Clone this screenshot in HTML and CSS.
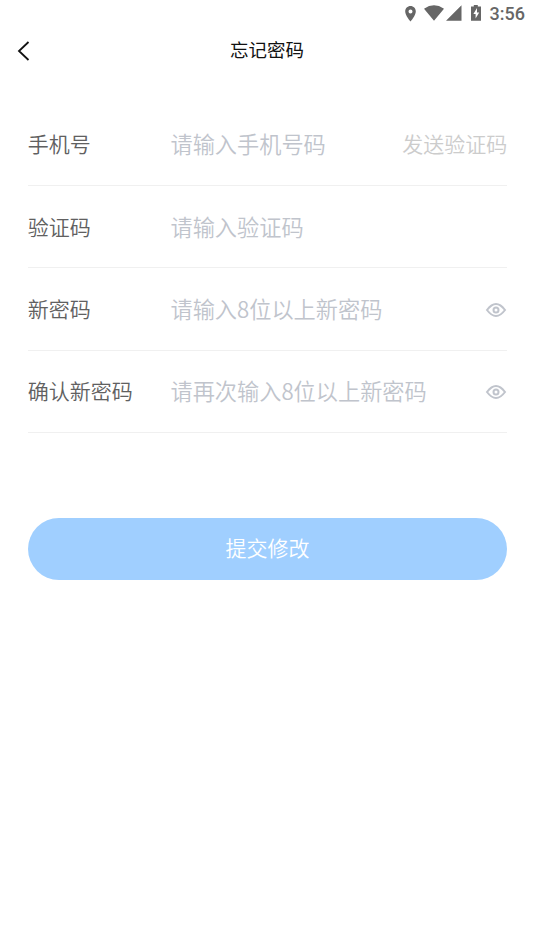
FILE: index.html
```html
<!DOCTYPE html>
<html lang="zh-CN">
<head>
<meta charset="utf-8">
<title>忘记密码</title>
<link rel="stylesheet" href="styles.css">
</head>
<body>
<div class="status">
<svg class="status-icons" width="80" height="24" viewBox="402 0 80 24"><path fill="#666" fill-rule="evenodd" d="M410.500 6c-3 0-5.300 2.400-5.300 5.400 0 4 5.300 10 5.300 10s5.300-6 5.300-10c0-3-2.300-5.400-5.300-5.400zm0 3.500a2 2 0 1 1 0 4 2 2 0 0 1 0-4z"/><path fill="#666" d="M424 8.700Q434 2 444 8.700L434 20.800zM461.500 5.200V20.800H446zM471 6.500h2.800V5h4v1.500H481V20.800h-10z"/><path fill="#fff" d="M477 8l-3.600 6h2.200v4.500l3.600-6H477z"/></svg>
<span class="clock">3:56</span>
</div>
<header class="header">
<svg class="back" width="16" height="24" viewBox="0 0 16 24"><path d="M12.500 3L3 12l9.500 9" fill="none" stroke="#111" stroke-width="1.800"/></svg>
<h1 class="title">忘记密码</h1>
</header>
<main class="form">
<div class="row"><span class="label">手机号</span><span class="hint">请输入手机号码</span><span class="send">发送验证码</span></div>
<div class="row"><span class="label">验证码</span><span class="hint">请输入验证码</span></div>
<div class="row"><span class="label">新密码</span><span class="hint">请输入8位以上新密码</span><svg class="eye" width="22" height="16" viewBox="0 0 22 16"><path d="M2 8Q11-4 20 8Q11 20 2 8z"/><circle cx="11" cy="8" r="2.500"/></svg></div>
<div class="row"><span class="label">确认新密码</span><span class="hint">请再次输入8位以上新密码</span><svg class="eye" width="22" height="16" viewBox="0 0 22 16"><path d="M2 8Q11-4 20 8Q11 20 2 8z"/><circle cx="11" cy="8" r="2.500"/></svg></div>
<button class="submit">提交修改</button>
</main>
</body>
</html>
```
FILE: styles.css
```css
body { margin: 0; height: 950px; background: #fff; font-family: "Noto Sans CJK SC", sans-serif; }
.status { height: 27px; display: flex; justify-content: flex-end; padding-right: 9px; box-sizing: border-box; }
.status-icons { margin-right: 8px; }
.clock { font: 500 18px/28px Roboto, sans-serif; color: #666; }
.header { height: 48px; display: grid; grid-template-columns: 40px 1fr 40px; align-items: center; }
.back { margin-left: 16px; }
.title { margin: 0; padding-bottom: 4px; text-align: center; font-size: 18.500px; font-weight: 400; line-height: 28px; color: #111; }
.form { padding: 28.700px 26.700px 0 27.700px; font-weight: 350; }
.row { height: 82.300px; box-sizing: border-box; border-bottom: 1px solid #f0f0f0; display: flex; align-items: center; white-space: nowrap; }
.label, .hint, .send { padding-bottom: 2px; }
.label { width: 142.800px; font-size: 21px; color: #606060; }
.hint { font-size: 22.200px; color: #c0c4cc; }
.send { margin-left: auto; font-size: 21px; color: #ccc; }
.eye { margin-left: auto; padding-top: 2px; fill: none; stroke: #c0c4cc; stroke-width: 2; }
.submit { display: block; width: 100%; height: 62.200px; margin-top: 84.800px; padding: 0 0 4px; border: 0; border-radius: 31px; background: #a0cfff; color: #fff; font: 350 21px/58px "Noto Sans CJK SC", sans-serif; }
```
